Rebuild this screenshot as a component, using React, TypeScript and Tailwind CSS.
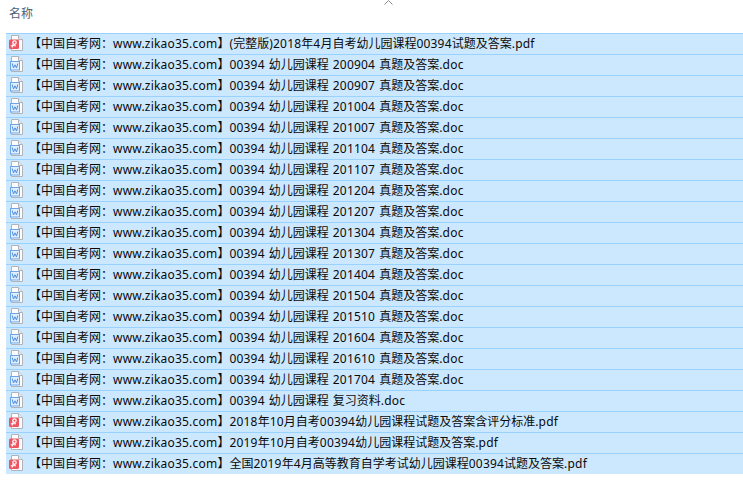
const P = "【中国自考网：www.zikao35.com】";
const rows: [string, string][] = [
  ["p", "(完整版)2018年4月自考幼儿园课程00394试题及答案.pdf"],
  ["w", "00394 幼儿园课程 200904 真题及答案.doc"],
  ["w", "00394 幼儿园课程 200907 真题及答案.doc"],
  ["w", "00394 幼儿园课程 201004 真题及答案.doc"],
  ["w", "00394 幼儿园课程 201007 真题及答案.doc"],
  ["w", "00394 幼儿园课程 201104 真题及答案.doc"],
  ["w", "00394 幼儿园课程 201107 真题及答案.doc"],
  ["w", "00394 幼儿园课程 201204 真题及答案.doc"],
  ["w", "00394 幼儿园课程 201207 真题及答案.doc"],
  ["w", "00394 幼儿园课程 201304 真题及答案.doc"],
  ["w", "00394 幼儿园课程 201307 真题及答案.doc"],
  ["w", "00394 幼儿园课程 201404 真题及答案.doc"],
  ["w", "00394 幼儿园课程 201504 真题及答案.doc"],
  ["w", "00394 幼儿园课程 201510 真题及答案.doc"],
  ["w", "00394 幼儿园课程 201604 真题及答案.doc"],
  ["w", "00394 幼儿园课程 201610 真题及答案.doc"],
  ["w", "00394 幼儿园课程 201704 真题及答案.doc"],
  ["w", "00394 幼儿园课程 复习资料.doc"],
  ["p", "2018年10月自考00394幼儿园课程试题及答案含评分标准.pdf"],
  ["p", "2019年10月自考00394幼儿园课程试题及答案.pdf"],
  ["p", "全国2019年4月高等教育自学考试幼儿园课程00394试题及答案.pdf"],
];

function Label({ text }: { text: string }) {
  return (
    <span className="ml-[5px]">
      {text.split(/([\x00-\x7f]+)/).map((part, i) =>
        /[\x00-\x7f]/.test(part) ? (
          <span key={i} className="tracking-[0.2px] [word-spacing:0.7px]">{part}</span>
        ) : (
          <span key={i}>{part}</span>
        )
      )}
    </span>
  );
}

function Icon({ kind }: { kind: string }) {
  return (
    <svg width="16" height="16" viewBox="0 0 16 16" className="shrink-0 mb-[2px]">
      <path d="M3.5 0.5H10.5L14.5 4.5V15.5H3.5Z" fill="#fdfdfd" stroke="#b0b4ba" />
      <path d="M10.5 0.5V4.5H14.5" fill="#e8eaed" stroke="#b0b4ba" />
      {kind === "p" ? (
        <>
          <rect x="1" y="4.5" width="10" height="9.5" rx="1.5" fill="#ee5560" />
          <circle cx="6.5" cy="7.6" r="1.7" stroke="#fff" strokeWidth="1.2" fill="none" />
          <path d="M5.3 8.8L4 12.5M2.8 10.8H8" stroke="#fff" strokeWidth="1.1" fill="none" />
        </>
      ) : (
        <>
          <rect x="2.5" y="5.5" width="9" height="8.5" fill="#e3eefc" stroke="#6aa5ea" />
          <path d="M4.2 7.5L5.5 12L7 8.8L8.5 12L9.8 7.5" stroke="#4a8fe2" fill="none" />
        </>
      )}
    </svg>
  );
}

export default function App() {
  return (
    <div className="w-[743px] h-[480px] bg-white overflow-hidden relative text-[12px] text-[#0a0a0a]" style={{ fontFamily: '"Noto Sans", "Noto Sans CJK SC", sans-serif' }}>
      <svg width="9" height="5" viewBox="0 0 9 5" className="absolute left-[384px] top-0">
        <path d="M0.5 4.5L4.5 0.5L8.5 4.5" stroke="#8a8a8a" fill="none" />
      </svg>
      <div className="h-[33px] pl-[9px] pt-[5px] leading-[18px] text-[#4c607a]">名称</div>
      <div className="ml-[6px] flex flex-col">
        {rows.map(([k, t], i) => (
          <div key={i} className="h-[21px] bg-[#cce8ff] border-t border-[#99d1ff] flex items-center pl-[2px] leading-[20px] whitespace-nowrap">
            <Icon kind={k} />
            <Label text={P + t} />
          </div>
        ))}
      </div>
    </div>
  );
}
